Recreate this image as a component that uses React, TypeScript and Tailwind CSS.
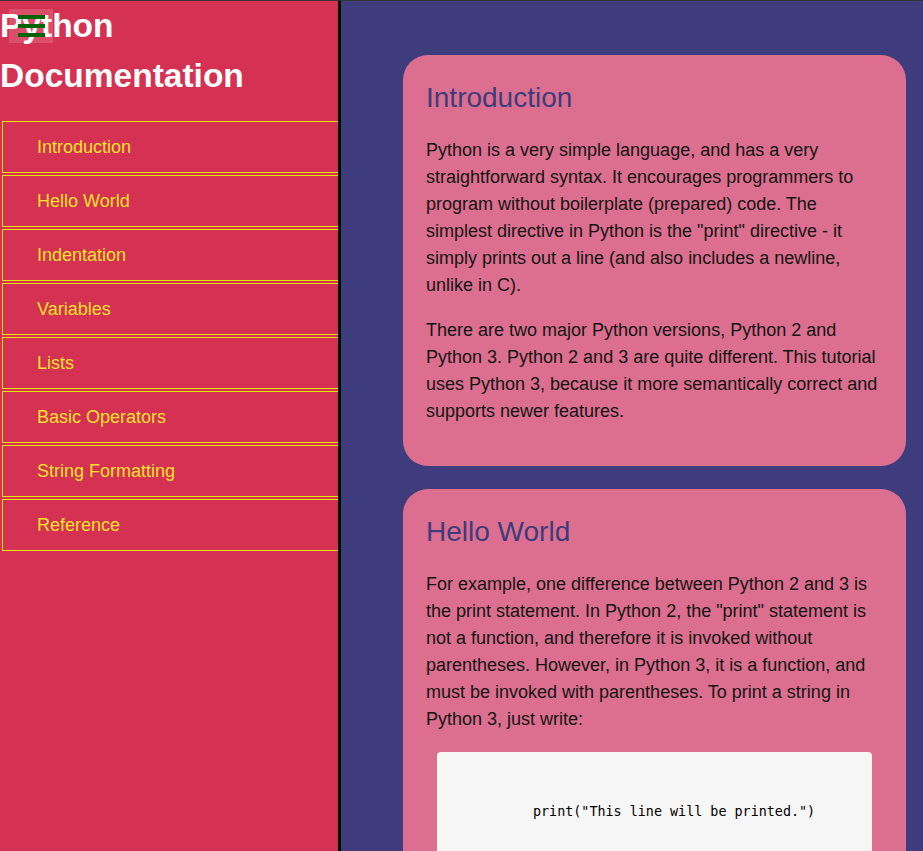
const links = [
  "Introduction",
  "Hello World",
  "Indentation",
  "Variables",
  "Lists",
  "Basic Operators",
  "String Formatting",
  "Reference",
];

function Section({ title, children }: { title: string; children: React.ReactNode }) {
  return (
    <section className="bg-[#dc6f8f] rounded-[25px] px-[23px] pt-[27px] pb-[23px]">
      <h2 className="text-[28px] leading-[32px] text-[#3e3c7c] mb-[23px]">{title}</h2>
      {children}
    </section>
  );
}

export default function App() {
  return (
    <div
      className="flex h-[851px] overflow-hidden border-t border-[#333] bg-[#3e3c7c]"
      style={{ fontFamily: '"Liberation Sans", Arial, sans-serif' }}
    >
      {/* Sidebar */}
      <nav className="relative w-[341px] shrink-0 bg-[#d53152] border-r-[3px] border-black overflow-hidden">
        <h1 className="text-[33.5px] leading-[50px] font-bold text-white">
          Python Documentation
        </h1>
        <div className="absolute left-[9px] top-[8px] w-[44px] h-[34px] bg-white/15 flex flex-col items-center justify-center gap-[5px]">
          <span className="block w-[27px] h-[4px] bg-[#006400]" />
          <span className="block w-[27px] h-[4px] bg-[#006400]" />
          <span className="block w-[27px] h-[4px] bg-[#006400]" />
        </div>
        <ul className="mt-[20px] ml-[2px] w-[360px] flex flex-col gap-[2px]">
          {links.map((l) => (
            <li
              key={l}
              className="h-[52px] border border-[#e6e600] pl-[34px] flex items-center text-[18px] text-[#f4e22c]"
            >
              {l}
            </li>
          ))}
        </ul>
      </nav>

      {/* Main */}
      <main className="flex-1 pl-[62px] pr-[17px] pt-[54px] flex flex-col gap-[23px] text-[18px] leading-[27px] text-[#141414]">
        <Section title="Introduction">
          <p className="mb-[18px]">
            Python is a very simple language, and has a very straightforward syntax. It
            encourages programmers to program without boilerplate (prepared) code. The
            simplest directive in Python is the "print" directive - it simply prints out a
            line (and also includes a newline, unlike in C).
          </p>
          <p className="mb-[18px]">
            There are two major Python versions, Python 2 and Python 3. Python 2 and 3 are
            quite different. This tutorial uses Python 3, because it more semantically
            correct and supports newer features.
          </p>
        </Section>
        <Section title="Hello World">
          <p className="mb-[19px]">
            For example, one difference between Python 2 and 3 is the print statement. In
            Python 2, the "print" statement is not a function, and therefore it is invoked
            without parentheses. However, in Python 3, it is a function, and must be invoked
            with parentheses. To print a string in Python 3, just write:
          </p>
          <pre
            className="mx-[11px] bg-[#f6f6f6] rounded-[4px] pl-[96px] pt-[52px] pb-[52px] text-[13.4px] leading-[16px] text-black"
            style={{ fontFamily: '"DejaVu Sans Mono", "Liberation Mono", monospace' }}
          >
            print("This line will be printed.")
          </pre>
        </Section>
      </main>
    </div>
  );
}
